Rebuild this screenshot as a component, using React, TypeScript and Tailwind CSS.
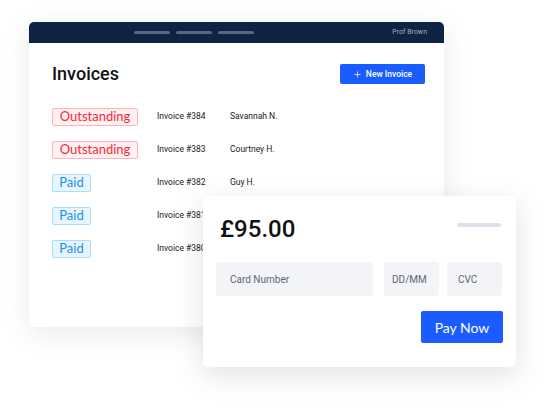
import { Plus } from "lucide-react";

const rows = [
  { status: "Outstanding", no: "384", name: "Savannah N." },
  { status: "Outstanding", no: "383", name: "Courtney H." },
  { status: "Paid", no: "382", name: "Guy H." },
  { status: "Paid", no: "381", name: "" },
  { status: "Paid", no: "380", name: "" },
];

function Badge({ status }: { status: string }) {
  if (status === "Paid") {
    return (
      <span className="inline-flex h-[18px] w-[39px] items-center justify-center rounded-[2px] border border-[#a9dcff] bg-[#e6f6ff] text-[13px] text-[#1b8fe3] [font-family:Lato,sans-serif]">
        Paid
      </span>
    );
  }
  return (
    <span className="inline-flex h-[18px] w-[86px] items-center justify-center rounded-[2px] border border-[#ffb4b9] bg-[#fff0f1] text-[13px] text-[#f22a3c] [font-family:Lato,sans-serif]">
      Outstanding
    </span>
  );
}

export default function App() {
  return (
    <div className="relative h-[410px] w-[550px] overflow-hidden bg-white [font-family:Roboto,sans-serif]">
      <div className="ml-[29px] mt-[22px] h-[305px] w-[415px] overflow-hidden rounded-[5px] bg-white shadow-[0_6px_28px_rgba(0,0,0,0.09)]">
        <div className="flex h-[21px] items-center bg-[#0f2344] pl-[105px] pr-[17px]">
          <div className="flex gap-[6px]">
            <div className="h-[3px] w-[36px] rounded-full bg-[#57677f]" />
            <div className="h-[3px] w-[36px] rounded-full bg-[#57677f]" />
            <div className="h-[3px] w-[36px] rounded-full bg-[#57677f]" />
          </div>
          <span className="ml-auto text-[7px] text-[#a3adbc]">Prof Brown</span>
        </div>
        <div className="pl-[23px] pr-[19px] pt-[21px]">
          <div className="flex items-center justify-between">
            <h1 className="text-[18px] font-medium leading-[20px] text-[#111]">Invoices</h1>
            <button className="flex h-[20px] w-[85px] items-center justify-center gap-[4px] rounded-[2px] bg-[#1a5cff] text-[8.5px] font-medium text-white">
              <Plus size={9} strokeWidth={2} />
              New Invoice
            </button>
          </div>
          <div className="mt-[23px] flex flex-col gap-[15px]">
            {rows.map((r) => (
              <div key={r.no} className="flex h-[18px] items-center">
                <div className="w-[105px]">
                  <Badge status={r.status} />
                </div>
                <span className="w-[73px] text-[8.5px] text-[#222]">Invoice #{r.no}</span>
                <span className="text-[8.5px] text-[#222]">{r.name}</span>
              </div>
            ))}
          </div>
        </div>
      </div>

      <div className="absolute left-[203px] top-[196px] h-[171px] w-[313px] rounded-[5px] bg-white px-[13px] pt-[18px] shadow-[0_8px_30px_rgba(0,0,0,0.12)]">
        <div className="flex items-start justify-between pl-[4px]">
          <span className="text-[24px] font-medium leading-[30px] text-[#111]">£95.00</span>
          <div className="mr-[2px] mt-[9px] h-[4px] w-[44px] rounded-full bg-[#dde1ea]" />
        </div>
        <div className="mt-[18px] flex h-[34px]">
          <div className="flex w-[157px] items-center rounded-[3px] bg-[#f3f4f7] pl-[14px] text-[10px] text-[#5f6679]">
            Card Number
          </div>
          <div className="ml-[11px] flex w-[55px] items-center rounded-[3px] bg-[#f3f4f7] pl-[8px] text-[10px] text-[#5f6679]">
            DD/MM
          </div>
          <div className="ml-[8px] flex w-[55px] items-center rounded-[3px] bg-[#f3f4f7] pl-[11px] text-[10px] text-[#5f6679]">
            CVC
          </div>
        </div>
        <div className="mt-[15px] flex justify-end">
          <button className="h-[32px] w-[82px] rounded-[2px] bg-[#1a5cff] text-[14px] text-white [font-family:Lato,sans-serif]">
            Pay Now
          </button>
        </div>
      </div>
    </div>
  );
}
